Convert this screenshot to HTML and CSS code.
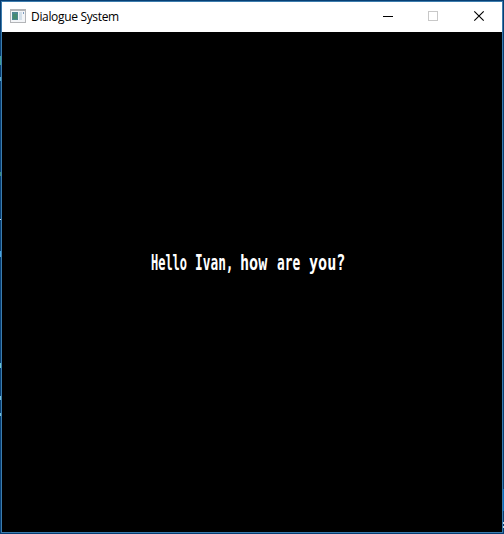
FILE: index.html
```html
<!DOCTYPE html>
<html lang="en">
<head>
<meta charset="utf-8">
<title>Dialogue System</title>
<link rel="stylesheet" href="styles.css">
</head>
<body>
<div class="window">
  <header class="titlebar">
    <svg class="app-icon" width="16" height="14" viewBox="0 0 16 14" shape-rendering="crispEdges">
      <path fill="#b3b5b8" d="M0 0h16v14H0z"/>
      <path fill="#f3f5f8" d="M1 2h14v11H1z"/>
      <path fill="#4d8791" d="M2 3h6v8H2z"/>
      <path fill="#458b70" d="M3 5h4v5H3z"/>
      <path fill="#d3dfe9" d="M9 3h3v8H9z"/>
      <path fill="#7b9bc0" d="M13 3h1v2h-1z"/>
    </svg>
    <span class="title">Dialogue System</span>
    <svg class="controls" width="137" height="30" viewBox="0 0 137 30" shape-rendering="crispEdges" fill="none">
      <path stroke="#000" d="M18 14.5h10"/>
      <path stroke="#c8c8c8" d="M63.5 9.5h9v9h-9z"/>
      <path stroke="#000" stroke-width="1.15" shape-rendering="auto" d="M109.3 9.3l9.4 9.4m0-9.4l-9.4 9.4"/>
    </svg>
  </header>
  <main class="canvas">
    <p class="dialogue">
      <span class="narrow">Hello</span>
      <span>Ivan,</span>
      <span class="wide">how</span>
      <span>are</span>
      <span class="wide">you?</span>
    </p>
  </main>
</div>
</body>
</html>
```
FILE: styles.css
```css
* { box-sizing: border-box; }
body {
  margin: 0;
  height: 534px;
  padding: 1px;
  overflow: hidden;
  background:
    linear-gradient(#3c9c96, #3c9c96) 0 56px / 1px 9px no-repeat,
    linear-gradient(#56a8cb, #56a8cb) 0 77px / 1px 4px no-repeat,
    linear-gradient(#358b80, #358b80) 0 172px / 1px 4px no-repeat,
    linear-gradient(#d0e5f0, #d0e5f0) 0 219px / 1px 1px no-repeat,
    linear-gradient(#45a3e2, #45a3e2) 0 251px / 1px 6px no-repeat,
    linear-gradient(#68c3cf, #68c3cf) 0 363px / 1px 5px no-repeat,
    linear-gradient(#72bfd8, #72bfd8) 0 396px / 1px 4px no-repeat,
    linear-gradient(#72bfd8, #72bfd8) 0 413px / 1px 3px no-repeat,
    linear-gradient(#096dc0, #096dc0) 503px 489px / 1px 22px no-repeat,
    linear-gradient(#c0d7e8, #c0d7e8) 503px 522px / 1px 2px no-repeat,
    linear-gradient(#c0d7e8, #c0d7e8) 503px 526px / 1px 2px no-repeat,
    #063e73;
}
.window {
  width: 502px;
  height: 532px;
  border: 1px solid #3c7cad;
  background: #000;
  display: flex;
  flex-direction: column;
}
.titlebar {
  height: 30px;
  background: #fff;
  display: flex;
  align-items: center;
  padding-left: 8px;
}
.app-icon { flex: none; margin-top: -2px; }
.title {
  margin: 0 auto 0 5px;
  font: 12px/16px "Open Sans", "Noto Sans", sans-serif;
  letter-spacing: -0.33px;
  color: #000;
}
.controls { flex: none; }
.canvas {
  flex: 1;
  display: flex;
  align-items: center;
  justify-content: center;
  padding-bottom: 39px;
  padding-right: 8px;
}
.dialogue {
  flex: none;
  margin: 0;
  display: grid;
  grid-template-columns: 44px 45px 37px 32px 36px;
  font: bold 21px/26px "DejaVu Sans Mono", monospace;
  color: #fff;
  white-space: nowrap;
}
/* Tall, narrow lettering: glyphs are squeezed towards the left edge of each word. */
.dialogue span {
  justify-self: start;
  transform: scaleX(0.61);
  transform-origin: left;
}
.dialogue .narrow { transform: scaleX(0.57); }
.dialogue .wide { transform: scaleX(0.72); }
```
